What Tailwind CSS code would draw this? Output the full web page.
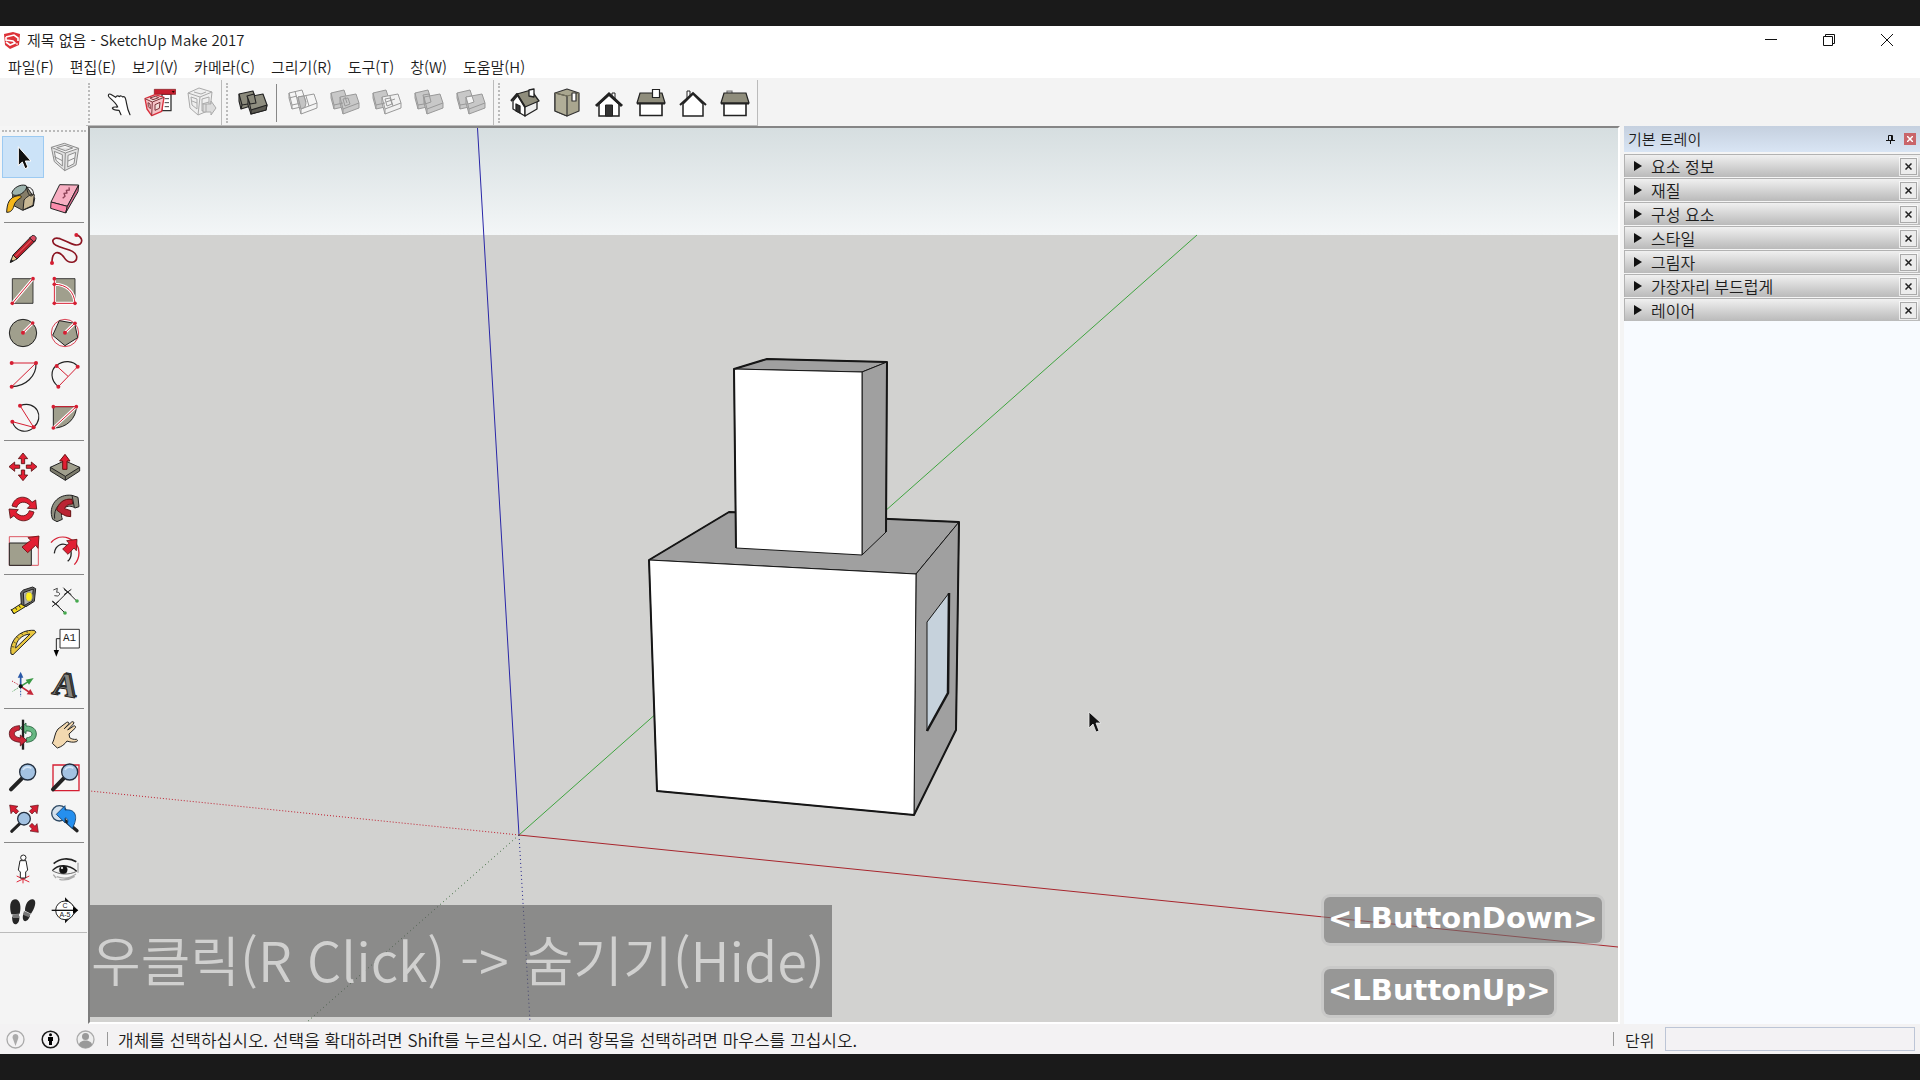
<!DOCTYPE html>
<html lang="ko">
<head>
<meta charset="utf-8">
<title>제목 없음 - SketchUp Make 2017</title>
<script src="https://cdn.jsdelivr.net/npm/@tailwindcss/browser@4"></script>
</head>
<body class="h-screen flex flex-col overflow-hidden bg-[#1a1a1a] py-[26px] font-['Noto_Sans_CJK_KR','Noto_Sans',sans-serif] font-[350] text-[15px] leading-5 text-[#1c1c1c]">
<div class="flex-1 min-h-0 flex flex-col bg-[#f4f4f4]">

<!-- Title bar -->
<header class="bg-white">
  <div class="h-7 flex items-center pl-1">
    <svg class="size-[18px]" viewBox="0 0 18 18"><path d="M0 3L9 1l7 2-1 11-9 4-5-4z" fill="#dd3238"/><path d="M2 6l8-2 4 3v3M2 6v3l7 1 2 2-5 2-4-3" fill="none" stroke="#fff" stroke-width="1.6"/><path d="M13 12v2" stroke="#fff"/></svg>
    <h1 class="ml-[5px] flex-1 font-[350]">제목 없음 - SketchUp Make 2017</h1>
    <button aria-label="최소화" class="w-[58px] h-7 grid place-items-center"><svg class="size-3" viewBox="0 0 12 12"><path d="M0 5.500h12" stroke="#111"/></svg></button>
    <button aria-label="이전 크기로" class="w-[58px] h-7 grid place-items-center"><svg class="size-3" viewBox="0 0 12 12"><path d="M.5 2.500h9v9h-9zM2.500 2.500v-2h9v9h-2" fill="none" stroke="#111"/></svg></button>
    <button aria-label="닫기" class="w-[58px] h-7 mr-1 grid place-items-center"><svg class="size-3" viewBox="0 0 12 12"><path d="M0 0l12 12M12 0L0 12" stroke="#111"/></svg></button>
  </div>
  <nav class="h-6 pt-[2px] flex items-center">
    <button class="px-2">파일(F)</button><button class="px-2">편집(E)</button><button class="px-2">보기(V)</button><button class="px-2">카메라(C)</button><button class="px-2">그리기(R)</button><button class="px-2">도구(T)</button><button class="px-2">창(W)</button><button class="px-2">도움말(H)</button>
  </nav>
</header>

<!-- Horizontal toolbars -->
<div class="h-12 shrink-0 flex pl-[86px] pt-[2px] bg-[#f3f3f3]">
  <div class="flex items-center bg-[#f5f5f5] border-b border-r border-[#bbb] pl-[2px]">
    <i class="h-[40px] mr-2 border-l-2 border-dotted border-[#bbb]"></i>
    <button aria-label="상호 작용" class="w-[41px] grid place-items-center"><svg class="size-[30px]" viewBox="69 33 90 90"><path d="M120 113l-6-13c-8 0-18-1-20-7 3-5 10-2 16-3-2-8-9-15-25-29-6-6-2-12 4-9l15 9c3-6 8-5 11-2 3-4 8-2 10 1 5-3 8 2 9 7 4 12 2 25 13 46" fill="#fff" stroke="#222" stroke-width="3.500" stroke-linecap="round" stroke-linejoin="round"/></svg></button>
    <button aria-label="구성요소 옵션" class="w-[41px] grid place-items-center"><svg class="size-[32px]" viewBox="192 27 96 96" stroke-linejoin="round"><path d="M246 48h27v50h-27z" fill="#fff" stroke="#333" stroke-width="4"/><path d="M254 62h13M254 74h13M254 86h13" stroke="#444" stroke-width="3"/><path d="M223 34h64v15h-64z" fill="#c8202f" stroke="#7d1018" stroke-width="2"/><path d="M275 39h9l-4 6z" fill="#300"/><path d="M195 62l30-12 27 8-7 42-30 13-14-20z" fill="#f6c3c7" stroke="#d92f3c" stroke-width="4"/><path d="M195 62l22 10 35-14M217 72l-2 40M204 74l6 4 1 14-6-6zM225 80l15-7-2 18-13 6zM210 60l16-5 10 4-17 6z" fill="#efdcd8" stroke="#7d333a" stroke-width="3"/></svg></button>
    <button aria-label="구성요소 속성" class="w-[41px] grid place-items-center"><svg class="size-[32px]" viewBox="0 0 32 32" fill="#efefef" stroke="#aaa"><path d="M3 6l11-5 13 4-2 18-12 5-8-7z"/><path d="M3 6l12 4 12-5M15 10l-2 18M6 10l6 2v10l-5-4zM17 12l7-2v10l-7 4zM9 5l7 2 5-2M7 14l5 2M17 17l7-2" fill="none"/><path d="M18 17h8v-3l5 7-5 7v-3h-8z" fill="#dcdcdc"/><path d="M21 17v8" /></svg></button>
  </div>
  <div class="flex items-center bg-[#f5f5f5] border-b border-r border-[#bbb] pl-1 pr-px">
    <i class="h-[40px] mr-1 border-l-2 border-dotted border-[#bbb]"></i>
    <button aria-label="외부 쉘" class="w-[42px] grid place-items-center"><svg class="size-[30px]" viewBox="0 0 30 30" stroke="#222" stroke-width="1.100" stroke-linejoin="round"><path d="M1 6l14-3 3 9-2 5-13 4-2-8z" fill="#8a897b"/><path d="M1 6l3 11 6-1M4 17l-1 4" fill="none"/><path d="M10 9l15-3 4 11-1 5-15 4-3-9z" fill="#8f8e80"/><path d="M13 22l16-5-1 5-15 4z" fill="#5b5a52"/><path d="M10 9l3 13" fill="none"/><path d="M9 8l7-2 2 9-6 1z" fill="#8a897b"/></svg></button>
    <i class="h-[38px] w-px ml-[2px] mr-[5px] bg-[#888]"></i>
    <button aria-label="교차" class="w-[42px] grid place-items-center"><svg class="size-[30px]" viewBox="0 0 30 30" stroke="#999" fill="none" stroke-linejoin="round"><path d="M1 5l13-3 4 12-14 3zM1 5v5l3 11 9-2v-4M4 17v4M1 10l8-2M10 9l16-3 3 9-16 6zM13 21v5l16-6v-5M10 9v6l3 11M7 3l3 12M18 8l3 10"/><path d="M10 9l6-1 2 7-1 4-4 2z" fill="#c4c4c4"/></svg></button>
    <button aria-label="결합" class="w-[42px] grid place-items-center"><svg class="size-[30px]" viewBox="0 0 30 30" stroke="#999" fill="#c8c8c8" stroke-linejoin="round"><path d="M1 5l13-3 4 12-5 5-9 2L1 10z"/><path d="M10 9l16-3 3 9v5l-16 6-3-11z"/><path d="M4 17l9-2M4 17v4M1 5l3 12M13 21l16-6M13 21v5M10 9l3 12M13 11l5-1 2 6-5 2zM15 9l2 6" fill="none"/></svg></button>
    <button aria-label="빼기" class="w-[42px] grid place-items-center"><svg class="size-[30px]" viewBox="0 0 30 30" stroke="#999" fill="none" stroke-linejoin="round"><path d="M1 5l13-3 4 12-5 5-9 2L1 10z" fill="#c8c8c8"/><path d="M10 9l16-3 3 9v5l-16 6-3-11z" fill="#f1f1f1"/><path d="M4 17l9-2M4 17v4M1 5l3 12M13 21l16-6M13 21v5M10 9l3 12M18 8l3 10M14 14l9-3M13 11l5-1 2 6-5 2z"/></svg></button>
    <button aria-label="자르기" class="w-[42px] grid place-items-center"><svg class="size-[30px]" viewBox="0 0 30 30" stroke="#999" fill="#c8c8c8" stroke-linejoin="round"><path d="M1 5l13-3 4 12-5 5-9 2L1 10z"/><path d="M10 9l16-3 3 9v5l-16 6-3-11z"/><path d="M4 17l6-1M4 17v4M1 5l3 12M13 21l16-6M13 21v5M10 9l3 12M9 7l6-1 2 8-6 2z" fill="none"/></svg></button>
    <button aria-label="분할" class="w-[42px] grid place-items-center"><svg class="size-[30px]" viewBox="0 0 30 30" stroke="#999" fill="#c8c8c8" stroke-linejoin="round"><path d="M1 5l13-3 4 12-5 5-9 2L1 10z"/><path d="M10 9l16-3 3 9v5l-16 6-3-11z"/><path d="M4 17l6-1M4 17v4M1 5l3 12M13 21l16-6M13 21v5M10 9l3 12" fill="none"/><path d="M10 9l6-1 2 6-6 2z" fill="#f5f5f5"/></svg></button>
  </div>
  <div class="flex items-center bg-[#f5f5f5] border-b border-r border-[#bbb] pl-1 pr-px">
    <i class="h-[40px] mr-1 border-l-2 border-dotted border-[#bbb]"></i>
    <button aria-label="등각 보기" class="w-[42px] grid place-items-center"><svg class="size-[30px]" viewBox="0 0 30 30" stroke="#222" stroke-width="1.300" stroke-linejoin="round"><path d="M3 13v8l12 7V17L8 7z" fill="#fff"/><path d="M15 18v10l12-7v-8z" fill="#eee"/><path d="M7 6l14-4 8 11-14 6z" fill="#8f8d7c"/><path d="M1 13l6-7 8 13" fill="none" stroke-width="2"/><path d="M6 16l4 2v7l-4-2z" fill="#333"/><path d="M19 2l5-1v8l-5-1z" fill="#fff"/></svg></button>
    <button aria-label="맨 위" class="w-[42px] grid place-items-center"><svg class="size-[30px]" viewBox="0 0 30 30" stroke="#333" stroke-width="1.200" stroke-linejoin="round"><path d="M3 5l12-4 12 4v18l-12 5-12-5z" fill="#a9a68f"/><path d="M15 8v20L3 23V5z" fill="#b1ae98"/><path d="M3 5l12 3 12-3" fill="none" stroke="#77745f"/><path d="M20 5h4v8h-4z" fill="#fff"/></svg></button>
    <button aria-label="앞면" class="w-[42px] grid place-items-center"><svg class="size-[30px]" viewBox="0 0 30 30" stroke="#222"><path d="M18 5h3v6h-3z" fill="#fff"/><path d="M5 16L15 7l10 9v12H5z" fill="#fff" stroke-width="1.500"/><path d="M2 18L15 6l13 12" fill="none" stroke-width="3"/><path d="M11.500 17h7v11h-7z" fill="#333"/></svg></button>
    <button aria-label="오른쪽" class="w-[42px] grid place-items-center"><svg class="size-[30px]" viewBox="0 0 30 30" stroke="#222" stroke-width="1.200"><path d="M4 15h22v12.500H4z" fill="#fff" stroke-width="1.600"/><path d="M4 5h22l3 10H1z" fill="#8f8d7c"/><path d="M1 15.500h28" stroke-width="2"/><path d="M16.500 1.500h7v8h-7z" fill="#fff"/></svg></button>
    <button aria-label="뒷면" class="w-[42px] grid place-items-center"><svg class="size-[30px]" viewBox="0 0 30 30" stroke="#222"><path d="M9 3h3v7H9z" fill="#fff"/><path d="M5 16L15 6l10 10v12H5z" fill="#fff" stroke-width="1.500"/><path d="M2 17L15 5l13 12" fill="none" stroke-width="2"/></svg></button>
    <button aria-label="왼쪽" class="w-[42px] grid place-items-center"><svg class="size-[30px]" viewBox="0 0 30 30" stroke="#222" stroke-width="1.200"><path d="M7 3h5v4H7z" fill="#ccc" stroke="#777"/><path d="M4 15h22v12.500H4z" fill="#fff" stroke-width="1.600"/><path d="M4 5h22l3 10H1z" fill="#8f8d7c"/><path d="M1 15.500h28" stroke-width="2"/></svg></button>
  </div>
</div>

<main class="flex-1 min-h-0 flex">
  <!-- Large tool set -->
  <aside class="w-[88px] shrink-0 flex flex-col items-start">
    <div class="w-[87px] pt-1 pl-[2px] border-b border-[#bbb] bg-[#f5f5f5]">
      <div class="mr-px mb-1 border-t-2 border-dotted border-[#bbb]"></div>
      <div class="w-[84px] grid grid-cols-2">
        <button aria-label="선택" class="size-[42px] bg-[#cce3f8] outline outline-1 -outline-offset-1 outline-[#9ccaf2]"><svg viewBox="6 48 126 126"><path d="M55 80v57l12-11 8 20 9-4-8-19h17z" fill="#111" stroke="#fff" stroke-width="3"/></svg></button>
        <button aria-label="구성요소 만들기" class="size-[42px]"><svg viewBox="132 48 126 126" fill="#e2e2e2" stroke="#8d8d8d" stroke-width="3" stroke-linejoin="round"><path d="M154 82l39-12 43 15-8 50-34 17-31-27z"/><path d="M154 82l42 17 40-14M196 99l-2 53M163 94l24 10v34l-19-17zM204 106l23-9-5 34-19 10zM170 83l25-7 23 8-22 8z" fill="#f4f4f4"/><path d="M163 110l24 12M204 123l20-9" fill="none"/></svg></button>
        <button aria-label="페인트통" class="size-[42px]"><svg viewBox="6 174 126 126" stroke="#222" stroke-width="3" stroke-linejoin="round"><path d="M38 215l40-18 26 38-4 23-32 13-30-16z" fill="#857d68"/><path d="M72 240c10-12 25-20 31-16l-4 32-30 14z" fill="#c9b894"/><path d="M36 218c4-14 24-26 40-22 10 4-2 22-18 28-12 4-22 2-22-6z" fill="#9db3ad"/><path d="M80 202c12-2 22 8 20 22-8 10-17 0-20-22z" fill="none"/><path d="M20 277c1-28 8-46 34-50 10-1 14 4 6 8-9 6-16 12-18 22-4 14-10 20-22 20z" fill="#f6b71a"/></svg></button>
        <button aria-label="지우개" class="size-[42px]"><svg viewBox="132 174 126 126" stroke="#222" stroke-width="3" stroke-linejoin="round"><path d="M153 246l26-52 57 1-34 64z" fill="#f7afc2"/><path d="M153 246l49 13-5 20-45-14z" fill="#fb8cac"/><path d="M202 259l34-64-2 20-37 64z" fill="#d66c8e"/><path d="M188 235l7-6-3-9 9-1-2-8 9-1-1-8" fill="none" stroke="#8b4055" stroke-width="4"/></svg></button>
      </div>
      <hr class="w-20 ml-[2px] mt-[2px] mb-[5px] border-t border-[#888]">
      <div class="w-[84px] grid grid-cols-2">
        <button aria-label="선" class="size-[42px]"><svg viewBox="6 324 126 126" stroke="#222" stroke-width="3" stroke-linejoin="round"><path d="M31 427l8-22 12 12z" fill="#e5c188"/><path d="M39 405l54-55 15 11-57 56z" fill="#b51f2b"/><path d="M46 409l54-54" stroke="#e04a53" stroke-width="4"/><path d="M89 354l7-7c6-3 15 4 12 11l-6 8z" fill="#dc4b62"/><path d="M31 427l3-8 5 5z" fill="#111"/></svg></button>
        <button aria-label="프리핸드" class="size-[42px]"><svg viewBox="132 324 126 126"><path d="M156 428c0-36 20-38 36-16 14 22 40 18 38-2-4-22-40-22-62-34-18-12-8-26 12-20 24 8 44 26 60 16 10-8 4-24-11-27" fill="none" stroke="#8c1522" stroke-width="5"/><g fill="#d51e32"><circle cx="156" cy="429" r="6"/><circle cx="229" cy="345" r="6"/></g></svg></button>
        <button aria-label="직사각형" class="size-[42px]"><svg viewBox="6 450 126 126"><path d="M37 476h62v74H37z" fill="#a09f8d" stroke="#222" stroke-width="2.500"/><path d="M37 550l62-74" stroke="#fff" stroke-width="9"/><path d="M37 550l62-74" stroke="#d51e32" stroke-width="3"/><g fill="#d51e32"><circle cx="37" cy="550" r="5.500"/><circle cx="99" cy="476" r="5.500"/></g></svg></button>
        <button aria-label="회전된 직사각형" class="size-[42px]"><svg viewBox="132 450 126 126" fill="none"><path d="M163 476h62v74h-62z" fill="#a09f8d" stroke="#222" stroke-width="2.500"/><path d="M163 476v74h62c-2-35-25-57-62-57" stroke="#fff" stroke-width="9"/><path d="M163 476v74h62c-2-35-25-57-62-57" stroke="#d51e32" stroke-width="3"/><g fill="#d51e32"><circle cx="163" cy="476" r="5.500"/><circle cx="163" cy="493" r="5.500"/><circle cx="163" cy="550" r="5.500"/><circle cx="225" cy="550" r="5.500"/></g></svg></button>
        <button aria-label="원" class="size-[42px]"><svg viewBox="6 576 126 126"><circle cx="69" cy="639" r="41" fill="#a09f8d" stroke="#222" stroke-width="3"/><path d="M69 638l29-29" stroke="#fff" stroke-width="9"/><path d="M69 638l29-29" stroke="#d51e32" stroke-width="3"/><g fill="#d51e32"><circle cx="69" cy="638" r="6"/><circle cx="98" cy="609" r="5.500"/></g></svg></button>
        <button aria-label="다각형" class="size-[42px]"><svg viewBox="132 576 126 126"><circle cx="195" cy="639" r="41" fill="none" stroke="#d51e32" stroke-width="2.500"/><path d="M178 602l46 8 9 43-38 24-37-31z" fill="#a09f8d" stroke="#222" stroke-width="3"/><path d="M195 638l29-28" stroke="#fff" stroke-width="9"/><path d="M195 638l29-28" stroke="#d51e32" stroke-width="3"/><g fill="#d51e32"><circle cx="195" cy="638" r="6"/><circle cx="225" cy="610" r="5.500"/></g></svg></button>
        <button aria-label="호" class="size-[42px]"><svg viewBox="6 702 126 126" fill="none"><path d="M108 729c2 40-32 70-73 71" stroke="#222" stroke-width="3.500"/><path d="M35 729h73l-73 71" stroke="#d51e32" stroke-width="3"/><g fill="#d51e32"><circle cx="35" cy="729" r="6"/><circle cx="108" cy="729" r="6"/><circle cx="35" cy="800" r="6"/></g></svg></button>
        <button aria-label="2점 호" class="size-[42px]"><svg viewBox="132 702 126 126" fill="none"><path d="M175 800c-25-20-24-50-5-64 20-16 50-15 63 4" stroke="#222" stroke-width="3.500"/><path d="M233 740l-58 60M170 738l34 31" stroke="#d51e32" stroke-width="3"/><g fill="#d51e32"><circle cx="170" cy="738" r="6"/><circle cx="233" cy="740" r="6"/><circle cx="175" cy="800" r="6"/></g></svg></button>
        <button aria-label="3점 호" class="size-[42px]"><svg viewBox="6 828 126 126" fill="none"><path d="M60 857c50-18 75 35 41 65-20 20-55 14-64-17" stroke="#222" stroke-width="3.500"/><path d="M60 857l41 65-64-17" stroke="#d51e32" stroke-width="3"/><g fill="#d51e32"><circle cx="60" cy="857" r="6"/><circle cx="37" cy="905" r="6"/><circle cx="101" cy="922" r="6"/></g></svg></button>
        <button aria-label="파이" class="size-[42px]"><svg viewBox="132 828 126 126" fill="none"><path d="M160 860h69c0 35-30 65-69 64z" fill="#a09f8d" stroke="#222" stroke-width="3"/><path d="M160 924l69-64" stroke="#fff" stroke-width="9"/><path d="M160 860h69l-69 64" stroke="#d51e32" stroke-width="3"/><g fill="#d51e32"><circle cx="160" cy="860" r="5.500"/><circle cx="229" cy="860" r="5.500"/><circle cx="160" cy="924" r="5.500"/></g></svg></button>
      </div>
      <hr class="w-20 ml-[2px] mt-[2px] mb-[5px] border-t border-[#888]">
      <div class="w-[84px] grid grid-cols-2">
        <button aria-label="이동" class="size-[42px]"><svg viewBox="6 48 126 126" fill="#e21f33" stroke="#511" stroke-width="2.500" stroke-linejoin="round"><path d="M69 69l-14 17h9v15h10V86h9z"/><path d="M69 152l-14-17h9v-15h10v15h9z"/><path d="M27 110l17-14v9h15v10H44v9z"/><path d="M111 110l-17-14v9H79v10h15v9z"/></svg></button>
        <button aria-label="밀기/끌기" class="size-[42px]"><svg viewBox="132 48 126 126" stroke="#222" stroke-width="3" stroke-linejoin="round"><path d="M151 112h88v11l-43 28-45-28z" fill="#7c7b6b"/><path d="M151 112l43-20 45 20-43 27z" fill="#a09f8d"/><path d="M196 139v12" /><path d="M195 73l-16 20h9v25h13V93h9z" fill="#e21f33" stroke="#611"/></svg></button>
        <button aria-label="회전" class="size-[42px]"><svg viewBox="6 174 126 126" fill="#e21f33" stroke="#511" stroke-width="2.500" stroke-linejoin="round"><path d="M36 228c8-32 44-34 60-11l11-7 3 27-28-2 8-8c-13-16-34-13-40 5z"/><path d="M102 246c-8 32-44 34-60 11l-11 8-4-28 28 2-7 8c13 16 34 13 40-5z"/></svg></button>
        <button aria-label="따라가기" class="size-[42px]"><svg viewBox="132 174 126 126" stroke="#222" stroke-width="3" stroke-linejoin="round"><path d="M158 268c-16-40 15-78 58-72l18 6 3 28-12 4c-20-14-50 0-38 34l-16 7z" fill="#8f8e80"/><path d="M164 266c-4-30 16-56 52-58M216 196l7 36" fill="none"/><path d="M170 240c4-20 22-36 46-32l2 14c-14 0-22 6-24 14l18 6v18l-14-2-12-6z" fill="#bb2433" stroke="#611"/></svg></button>
        <button aria-label="배율" class="size-[42px]"><svg viewBox="6 300 126 126"><path d="M28 320h87v86H28z" fill="none" stroke="#d93a48" stroke-width="2.500"/><path d="M28 339h66v67H28z" fill="#a09f8d" stroke="#222" stroke-width="3"/><path d="M117 318l-33 5 8 8-26 20 17 17 24-22 7 9z" fill="#e21f33" stroke="#611" stroke-width="2.500"/></svg></button>
        <button aria-label="오프셋" class="size-[42px]"><svg viewBox="132 300 126 126" fill="none"><path d="M153 338c30-35 85-10 84 30 0 14-5 26-14 36" stroke="#d51e32" stroke-width="4"/><path d="M163 370c3-26 25-33 40-23 14 9 14 35 0 47" stroke="#222" stroke-width="4"/><path d="M231 328l-31 4 7 8-19 17 16 16 18-19 7 8z" fill="#e21f33" stroke="#611" stroke-width="2.500"/></svg></button>
      </div>
      <hr class="w-20 ml-[2px] mt-[2px] mb-[5px] border-t border-[#888]">
      <div class="w-[84px] grid grid-cols-2">
        <button aria-label="줄자" class="size-[42px]"><svg viewBox="6 450 126 126" stroke="#222" stroke-width="3" stroke-linejoin="round"><path d="M34 540l34-22 8 12-34 21z" fill="#f0d722"/><path d="M33 537l9 15M46 532l4 7M57 526l4 7"/><path d="M62 488l8-8 28-9 9 5-4 38-25 16-14-7z" fill="#666"/><path d="M70 488l30-11-4 36-24 14z" fill="#b4b4b4"/><ellipse cx="87" cy="500" rx="10" ry="14" fill="#fff01f" stroke="#998"/></svg></button>
        <button aria-label="치수" class="size-[42px]"><svg viewBox="132 450 126 126" fill="none" stroke="#222" stroke-width="3"><path d="M167 522l36-36M158 513l37 36M190 473l39 39M156 530l20-16M156 514l22 16M192 494l22-16M192 478l22 16"/><path d="M160 480l12-5-2 12c10-2 12 8 3 11l-10-1" stroke-width="2.500"/><g fill="#45a94e" stroke="none"><circle cx="195" cy="549" r="5.500"/><circle cx="231" cy="513" r="5.500"/></g></svg></button>
        <button aria-label="각도기" class="size-[42px]"><svg viewBox="6 576 126 126" stroke="#222" stroke-width="3" stroke-linejoin="round"><path fill-rule="evenodd" d="M33 672c-6-36 22-74 70-71l5 6-69 67zM47 654l43-42c-25 2-42 20-43 42z" fill="#e8c640"/><path d="M36 650l7 1M40 635l7 4M50 620l6 5M64 609l4 6M80 603l2 6" stroke-width="2"/></svg></button>
        <button aria-label="텍스트" class="size-[42px]"><svg viewBox="132 576 126 126"><path d="M180 598h58v56h-58z" fill="#fff" stroke="#333" stroke-width="3"/><text x="189" y="634" font-family="Liberation Mono" font-size="33" fill="#222">A1</text><path d="M180 626h-11v36" fill="none" stroke="#222" stroke-width="3"/><path d="M161 660h16l-8 20z"/></svg></button>
        <button aria-label="축" class="size-[42px]"><svg viewBox="6 702 126 126" fill="none"><path d="M62 769v-30" stroke="#2a59a8" stroke-width="5"/><path d="M53 743l9-18 8 18z" fill="#2a59a8"/><path d="M62 769l24-15" stroke="#3a9a45" stroke-width="5"/><path d="M77 749l24-5-14 20z" fill="#3a9a45"/><path d="M62 769l25 17" stroke="#c5283a" stroke-width="5"/><path d="M80 793l11-16 10 18z" fill="#c5283a"/><path d="M62 773v28" stroke="#2a59a8" stroke-width="3" stroke-dasharray="5 4"/><path d="M60 770l-22 14" stroke="#3a9a45" stroke-width="3" stroke-dasharray="4 4"/><path d="M60 767l-24-14" stroke="#c5283a" stroke-width="3" stroke-dasharray="4 4"/><circle cx="62" cy="769" r="6" fill="#111"/></svg></button>
        <button aria-label="3D 텍스트" class="size-[42px]"><svg class="overflow-visible" viewBox="132 702 126 126" font-family="Liberation Serif" font-weight="bold" font-size="100" stroke="#222" stroke-width="3"><g transform="rotate(10 195 765)"><text x="163" y="794" fill="#4c4c48">A</text><text x="158" y="798" fill="#858581">A</text></g></svg></button>
      </div>
      <hr class="w-20 ml-[2px] mt-[2px] mb-[5px] border-t border-[#888]">
      <div class="w-[84px] grid grid-cols-2">
        <button aria-label="궤도" class="size-[42px]"><svg viewBox="6 42 126 126" stroke-width="2.500" stroke-linejoin="round"><path d="M60 84l18-15v9c20 0 31 10 31 24 0 16-13 24-30 25v-13c10-2 17-5 17-12s-9-10-18-9v8z" fill="#67b883" stroke="#1f5c36"/><path d="M69 59v90" stroke="#222" stroke-width="7"/><path d="M59 77c-20 1-31 10-31 24 0 16 12 24 33 26v11l19-17-19-16v9c-11-2-18-6-18-13 0-6 7-10 16-11z" fill="#cb2638" stroke="#5c1119"/></svg></button>
        <button aria-label="이동 보기" class="size-[42px]"><svg viewBox="132 42 126 126"><path d="M157 130c7-12 7-32 17-43l26-20c5-3 9 2 5 6l-12 13 22-20c5-3 9 1 5 6l-17 18 18-12c5-2 8 3 4 7l-18 17 2 11c6 4 12 6 21 5 4 2 2 7-1 7-10 3-20 1-28-2-8 11-16 17-29 21z" fill="#f3d9b0" stroke="#222" stroke-width="3" stroke-linejoin="round"/></svg></button>
        <button aria-label="확대/축소" class="size-[42px]"><svg viewBox="6 168 126 126"><path d="M66 235L33 268" stroke="#222" stroke-width="12" stroke-linecap="round"/><circle cx="83" cy="216" r="24" fill="#a3c2e2" stroke="#222e3e" stroke-width="4"/><path d="M69 210c4-10 18-11 25-5" stroke="#d5e6f6" stroke-width="5" fill="none"/></svg></button>
        <button aria-label="확대/축소 창" class="size-[42px]"><svg viewBox="132 168 126 126"><path d="M159 195h78v77h-78z" fill="none" stroke="#d51e32" stroke-width="4"/><path d="M191 235l-32 33" stroke="#222" stroke-width="12" stroke-linecap="round"/><circle cx="209" cy="216" r="24" fill="#a3c2e2" stroke="#222e3e" stroke-width="4"/><path d="M195 210c4-10 18-11 25-5" stroke="#d5e6f6" stroke-width="5" fill="none"/></svg></button>
        <button aria-label="범위 확대/축소" class="size-[42px]"><svg viewBox="6 294 126 126"><path d="M60 370l-25 24" stroke="#222" stroke-width="9" stroke-linecap="round"/><circle cx="72" cy="356" r="19" fill="#a3c2e2" stroke="#222e3e" stroke-width="4"/><g fill="#d51e32" stroke="#5c1119" stroke-width="2"><path d="M29 315l25 4-7 6 9 9-8 8-9-9-6 8z"/><path d="M115 315l-25 4 7 6-9 9 8 8 9-9 6 8z"/><path d="M115 397l-25-4 7-6-9-9 8-8 9 9 6-8z"/></g></svg></button>
        <button aria-label="이전" class="size-[42px]"><svg viewBox="132 294 126 126"><circle cx="178" cy="340" r="23" fill="#d3e0ec" stroke="#2e4963" stroke-width="4"/><path d="M196 362l35 30" stroke="#222" stroke-width="10" stroke-linecap="round"/><path d="M169 343l26-26v13c34-4 36 22 28 42l-6 14-15-15c4-12 0-17-7-17v14z" fill="#258fee" stroke="#123c67" stroke-width="2.500"/></svg></button>
      </div>
      <hr class="w-20 ml-[2px] mt-[2px] mb-[5px] border-t border-[#888]">
      <div class="w-[84px] grid grid-cols-2">
        <button aria-label="카메라 위치" class="size-[42px]"><svg viewBox="6 444 126 126"><path d="M50 546l38-18M50 528l38 18M69 525v25" stroke="#e02638" stroke-width="3"/><path d="M60 482l-5 28 6 6v18h16v-18l6-6-5-28z" fill="#fff" stroke="#222" stroke-width="3"/><circle cx="70" cy="473" r="8" fill="#fff" stroke="#222" stroke-width="3"/></svg></button>
        <button aria-label="둘러보기" class="size-[42px]"><svg viewBox="132 444 126 126" fill="none" stroke="#222"><path d="M170 530c20 7 42 4 58-8M178 538c15 4 32 0 46-9M234 488v30M160 524l8 10" stroke="#aaa" stroke-width="4"/><path d="M161 491c18-16 45-19 68-6" stroke-width="5"/><path d="M157 512c17-20 49-20 73 2" stroke-width="4"/><path d="M157 512c20 12 50 14 73 2" fill="#eee" stroke-width="2"/><circle cx="190" cy="509" r="12" fill="#111"/><circle cx="186" cy="504" r="3.500" fill="#ddd" stroke="none"/></svg></button>
        <button aria-label="걷기" class="size-[42px]"><svg viewBox="6 570 126 126" fill="#262626"><path d="M34 643c-6-20-5-44 11-45 17 0 19 25 14 43zM36 650l22-2c3 26-18 34-21 13z"/><path d="M75 632c0-20 11-36 24-34 14 4 4 30-6 43zM72 638l18 10c-8 22-25 20-21-2z"/><path d="M37 643l20-1v12H38zM72 633l20 9-5 10-18-8z" fill="#777"/></svg></button>
        <button aria-label="단면" class="size-[42px]"><svg viewBox="132 570 126 126"><path d="M195 592l39 39-39 39z" fill="#111"/><circle cx="195" cy="631" r="28" fill="#fff" stroke="#222" stroke-width="3"/><path d="M155 631h75" stroke="#111" stroke-width="4"/><path d="M219 622l16 9-16 9z"/><g font-family="Liberation Sans" font-size="21" text-anchor="middle" fill="#222"><text x="195" y="625">C</text><text x="195" y="650">A-5</text></g></svg></button>
      </div>
    </div>
  </aside>

  <!-- Model view -->
  <section class="relative flex-1 min-w-0 border-t-2 border-l-2 border-t-[#858585] border-l-[#7c7c7c] border-r-2 border-b-2 border-r-white border-b-white bg-[#d2d2d0] overflow-hidden">
    <svg class="block w-full h-full" viewBox="90 128 1528 894" preserveAspectRatio="xMinYMin slice">
      <defs><linearGradient id="sky" x2="0" y2="1"><stop stop-color="#d6dee0"/><stop offset="1" stop-color="#f3f6f7"/></linearGradient></defs>
      <path d="M90 128h1528v107H90z" fill="url(#sky)"/>
      <g fill="none" stroke-width="1">
        <path d="M477.500 128L519 835" stroke="#2a27a8"/>
        <path d="M519 835L1197 235" stroke="#3fa43f"/>
        <path d="M519 835l1099 112" stroke="#a8262d"/>
        <g stroke-dasharray="1 3"><path d="M519 835L90 791" stroke="#c02030" stroke-dasharray="1 2"/><path d="M519 835L307 1022" stroke="#3c6a3c"/><path d="M519 835l11 187" stroke="#22228c"/></g>
      </g>
      <g stroke="#161616" stroke-linejoin="round" stroke-width="1">
        <path d="M649 560l80-48 230 10-43 52z" fill="#a0a0a0"/>
        <path d="M916 574l43-52-3 208-42 85z" fill="#a0a0a0"/>
        <path d="M649 560l267 14-2 241-257-24z" fill="#fff"/>
        <path d="M649 560l80-48 230 10-3 208-42 85-257-24z" fill="none" stroke-width="2"/>
        <path d="M927 622l22-29-1 100-21 38z" fill="#c6d2dc"/>
        <path d="M949 593l-1 100-21 38" fill="none" stroke-width="2.500"/>
        <path d="M734 369l33-10 120 3-25 10z" fill="#a0a0a0"/>
        <path d="M862 372l25-10-1 170-24 23z" fill="#a0a0a0"/>
        <path d="M734 369l128 3v183l-126-7z" fill="#fff"/>
        <path d="M736 548l-2-179 33-10 120 3-1 170" fill="none" stroke-width="2"/>
      </g>
      <path d="M1089 712v16l4-4 3 8 3-1-3-8h5z" fill="#111" stroke="#eee" stroke-width=".8"/>
    </svg>
    <p class="absolute left-0 bottom-[5px] h-28 w-[742px] pl-px pb-1 flex items-center bg-[#5b5b5b]/60 text-[54px] leading-none font-[350] text-[#d0d0cf] whitespace-nowrap">우클릭(R Click) -&gt; 숨기기(Hide)</p>
    <div class="absolute left-[1234px] bottom-[7px] flex flex-col items-start gap-[26px] font-['DejaVu_Sans',sans-serif] font-bold text-[29px] leading-none text-white">
      <span class="h-[46px] px-1 pb-1 flex items-center rounded-md bg-[#6f6f6f]/60 ring-3 ring-[#bcbcbc]/40">&lt;LButtonDown&gt;</span>
      <span class="h-[46px] px-1 pb-1 flex items-center rounded-md bg-[#6f6f6f]/60 ring-3 ring-[#bcbcbc]/40">&lt;LButtonUp&gt;</span>
    </div>
  </section>

  <!-- Default tray -->
  <aside class="w-[296px] ml-1 shrink-0 bg-[#f8fbff]">
    <div class="h-[26px] flex items-center pl-1 pr-1 bg-linear-to-b from-[#c5d0df] to-[#d9e5f4]">
      <h2 class="flex-1 font-[350]">기본 트레이</h2>
      <button aria-label="고정" class="mr-[9px]"><svg class="size-[9px]" viewBox="0 0 9 9"><path d="M2.500 5V.5h4V5M0 5.500h9M4.500 6v3M5.500 1v4" fill="none" stroke="#111"/></svg></button>
      <button aria-label="트레이 닫기" class="size-3 grid place-items-center bg-[#c9656a]"><svg class="size-[6px]" viewBox="0 0 6 6"><path d="M0 0l6 6M6 0L0 6" stroke="#fff" stroke-width="1.500"/></svg></button>
    </div>
    <ul class="pt-[2px] flex flex-col gap-px bg-[#f5f5f5] text-[16px]" id="tray"></ul>
  </aside>
</main>

<!-- Status bar -->
<footer class="h-[30px] shrink-0 flex items-center bg-[#f3f2f3] pl-[6px] pr-[5px]">
  <button aria-label="위치 정보" class="mr-4"><svg class="size-[19px]" viewBox="0 0 19 19"><circle cx="9.500" cy="9.500" r="8.500" fill="none" stroke="#aaa" stroke-width="1.300"/><path d="M9.500 16L7 9c-1-2 0-5 2.500-5S13 7 12 9z" fill="#aaa"/></svg></button>
  <button aria-label="크레딧" class="mr-4"><svg class="size-[19px]" viewBox="0 0 19 19"><circle cx="9.500" cy="9.500" r="8.300" fill="none" stroke="#1c1c1c" stroke-width="1.500"/><circle cx="9.500" cy="4.800" r="1.500"/><path d="M7 7h5v4h-1v4H8v-4H7z"/></svg></button>
  <button aria-label="로그인" class="mr-3"><svg class="size-[19px]" viewBox="0 0 19 19"><circle cx="9.500" cy="9.500" r="8.500" fill="#eee" stroke="#aaa" stroke-width="1.300"/><circle cx="9.500" cy="6.500" r="3.500" fill="#999"/><path d="M3 15c0-6 13-6 13 0-3 4-10 4-13 0z" fill="#999"/></svg></button>
  <i class="w-px h-[14px] bg-[#999]"></i>
  <p class="ml-[10px] flex-1 pt-px text-[17px] whitespace-nowrap">개체를 선택하십시오. 선택을 확대하려면 Shift를 누르십시오. 여러 항목을 선택하려면 마우스를 끄십시오.</p>
  <i class="w-px h-[14px] mr-[11px] bg-[#999]"></i>
  <label for="units" class="w-[40px] pt-px text-[16px]">단위</label>
  <input id="units" class="w-[250px] h-6 border border-[#bcc5d6] bg-[#f3f2f4]">
</footer>
</div>

<script>
// Collapsed tray panels
document.getElementById('tray').innerHTML = ['요소 정보','재질','구성 요소','스타일','그림자','가장자리 부드럽게','레이어'].map(name => `
  <li class="h-[23px] flex items-center border-t border-l border-[#b2b2b2] bg-linear-to-b from-[#f0f0f0] to-[#bababa] pl-[9px] pr-[3px]">
    <button class="flex-1 flex items-center text-left"><svg class="w-[8px] h-[10px] mr-[9px]" viewBox="0 0 8 10"><path d="M0 0l8 5-8 5z" fill="#111"/></svg>${name}</button>
    <button aria-label="${name} 닫기" class="size-[17px] grid place-items-center border border-[#aaa] outline outline-1 outline-white/70 bg-[#ececec]"><svg class="size-[7px]" viewBox="0 0 7 7"><path d="M.5 .5l6 6M6.500 .5l-6 6" stroke="#222" stroke-width="1.500"/></svg></button>
  </li>`).join('');
</script>
</body>
</html>
